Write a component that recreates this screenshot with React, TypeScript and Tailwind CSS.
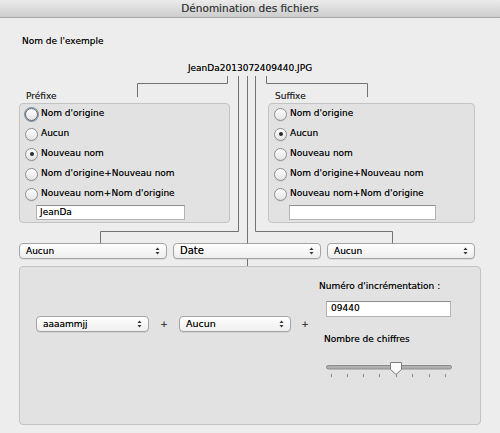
import React from 'react';

const prefixOptions = ["Nom d'origine", 'Aucun', 'Nouveau nom', "Nom d'origine+Nouveau nom", "Nouveau nom+Nom d'origine"];

function Radio({ checked, focused }: { checked?: boolean; focused?: boolean }) {
  return (
    <span
      className={`relative flex w-[13px] h-[13px] shrink-0 items-center justify-center rounded-full border bg-gradient-to-b from-white to-[#e2e2e2] shadow-[0_1px_0_rgba(0,0,0,0.06)] ${
        focused ? 'border-[#59626e] ring-1 ring-[#8696a9]' : 'border-[#8f8f8f]'
      } ${checked ? 'from-[#f4f4f4] to-[#d6d6d6]' : ''}`}
    >
      {checked && <span className="w-[4px] h-[4px] rounded-full bg-[#2a2a2a]"></span>}
    </span>
  );
}

function Arrows() {
  return (
    <svg width="5" height="8" viewBox="0 0 5 8" className="shrink-0">
      <path d="M2.5 0.5 L4.5 3 H0.5 Z" fill="#333" />
      <path d="M2.5 7.5 L4.5 5 H0.5 Z" fill="#333" />
    </svg>
  );
}

function Select({ label, className = '' }: { label: string; className?: string }) {
  return (
    <div
      className={`flex h-[16px] items-center justify-between rounded-[4px] border border-[#a3a3a3] bg-gradient-to-b from-white to-[#eeeeee] pl-[6px] pr-[6px] shadow-[0_1px_0_rgba(0,0,0,0.07)] ${className}`}
    >
      <span className="leading-none text-black">{label}</span>
      <Arrows />
    </div>
  );
}

function Field({ value, className = '' }: { value: string; className?: string }) {
  return (
    <div
      className={`flex h-[15px] items-center border border-[#b3b3b3] border-t-[#8e8e8e] bg-white pl-[3px] text-black ${className}`}
    >
      {value}
    </div>
  );
}

function Group({
  title,
  selected,
  focusFirst,
  value,
  width,
  fieldWidth,
  fieldIndent,
}: {
  title: string;
  selected: number;
  focusFirst?: boolean;
  value: string;
  width: string;
  fieldWidth: string;
  fieldIndent: string;
}) {
  return (
    <div className={width}>
      <div className="h-[12px] pl-[7px] leading-[12px] text-[#2a2a2a]">{title}</div>
      <div className="mt-[1px] h-[120px] rounded-[4px] border border-[#c3c3c3] bg-[#e2e2e2]">
        {prefixOptions.map((opt, i) => (
          <div key={opt} className="flex h-[20px] items-center pl-[5px]">
            <Radio checked={i === selected} focused={focusFirst && i === 0} />
            <span className="ml-[3px] text-black">{opt}</span>
          </div>
        ))}
        <Field value={value} className={`mt-[1px] ${fieldWidth} ${fieldIndent}`} />
      </div>
    </div>
  );
}

function Slider() {
  const ticks = [6, 22, 38, 54, 71, 87, 104, 120];
  return (
    <svg width="128" height="18" viewBox="0 0 128 18" className="ml-[6px] mt-[16px]">
      <rect x="1.5" y="4.5" width="125" height="3.5" rx="1.75" fill="#b0b0b0" stroke="#8c8c8c" />
      {ticks.map((t) => (
        <line key={t} x1={t + 0.5} x2={t + 0.5} y1="13" y2="16" stroke="#8a8a8a" />
      ))}
      <path d="M65.5 1.5 H76.5 V8.5 L71 13.5 L65.5 8.5 Z" fill="#fafafa" stroke="#7a7a7a" />
    </svg>
  );
}

export default function App() {
  return (
    <div
      className="relative w-[500px] h-[433px] overflow-hidden bg-[#ededed] text-[9px] font-['DejaVu_Sans',sans-serif] [text-shadow:0_0_0.5px_rgba(0,0,0,0.55)]"
    >
      {/* Title bar */}
      <div className="flex h-[18px] items-center justify-center border-b border-[#a9a9a9] bg-gradient-to-b from-[#ebebeb] to-[#cdcdcd] text-[10.5px] text-[#3e3e3e]">
        Dénomination des fichiers
      </div>

      <div className="px-[19px]">
        <div className="mt-[17px] h-[12px] pl-[3px] leading-[12px] text-black">Nom de l'exemple</div>
        <div className="mt-[15px] h-[12px] text-center leading-[12px] text-black">JeanDa2013072409440.JPG</div>

        {/* Prefix / suffix */}
        <div className="mt-[16px] flex gap-[38px]">
          <Group
            title="Préfixe"
            selected={2}
            focusFirst
            value="JeanDa"
            width="w-[211px]"
            fieldWidth="w-[149px]"
            fieldIndent="ml-[16px]"
          />
          <Group
            title="Suffixe"
            selected={1}
            value=""
            width="w-[207px]"
            fieldWidth="w-[147px]"
            fieldIndent="ml-[20px]"
          />
        </div>

        {/* Selects */}
        <div className="mt-[20px] flex gap-[6px]">
          <Select label="Aucun" className="w-[148px]" />
          <Select label="Date" className="w-[148px] text-[10px]" />
          <Select label="Aucun" className="w-[148px]" />
        </div>

        {/* Date block */}
        <div className="mt-[7px] flex h-[159px] items-start rounded-[4px] border border-[#c3c3c3] bg-[#e2e2e2] pl-[16px]">
          <Select label="aaaammjj" className="mt-[49px] w-[113px]" />
          <span className="mt-[51px] w-[30px] text-center text-[#333]">+</span>
          <Select label="Aucun" className="mt-[49px] w-[112px] text-[9.5px]" />
          <span className="mt-[51px] w-[28px] text-center text-[#333]">+</span>
          <div className="flex flex-col pt-[13px]">
            <div className="h-[12px] leading-[12px] text-black">Numéro d'incrémentation :</div>
            <div className="ml-[7px] mt-[9px] flex h-[16px] w-[125px] items-center border border-[#b3b3b3] border-t-[#8e8e8e] bg-white pl-[4px] text-black">
              09440
            </div>
            <div className="ml-[5px] mt-[16px] h-[12px] leading-[12px] text-black">Nombre de chiffres</div>
            <Slider />
          </div>
        </div>
      </div>

      {/* Connector lines */}
      <svg className="pointer-events-none absolute inset-0" width="500" height="433" viewBox="0 0 500 433">
        <g fill="none" stroke="#727272" strokeWidth="1">
          <path d="M137.5 97 V83.5 H227.5 V76" />
          <path d="M266.5 76 V83.5 H367.5 V97" />
          <path d="M238.5 76 V231.5 H100.5 V243" />
          <path d="M247.5 76 V243" />
          <path d="M255.5 76 V231.5 H392.5 V243" />
          <path d="M247.5 259 V266" />
        </g>
      </svg>
    </div>
  );
}
